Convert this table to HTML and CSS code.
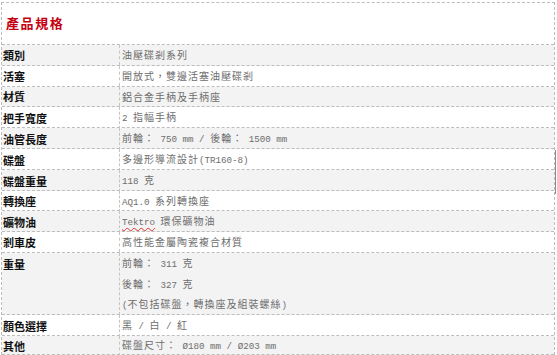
FILE: index.html
```html
<!DOCTYPE html>
<html lang="zh-Hant">
<head>
<meta charset="utf-8">
<title>產品規格</title>
<link rel="stylesheet" href="styles.css">
</head>
<body>
<div class="spec">
  <div class="spec-head">產品規格</div>
  <div class="row alt"><div class="label">類別</div><div class="value">油壓碟剎系列</div></div>
  <div class="row"><div class="label">活塞</div><div class="value">開放式，雙邊活塞油壓碟剎</div></div>
  <div class="row alt"><div class="label">材質</div><div class="value">鋁合金手柄及手柄座</div></div>
  <div class="row"><div class="label">把手寬度</div><div class="value"><span class="en">2 </span>指幅手柄</div></div>
  <div class="row alt"><div class="label">油管長度</div><div class="value">前輪：<span class="en"> 750 mm / </span>後輪：<span class="en"> 1500 mm</span></div></div>
  <div class="row"><div class="label">碟盤</div><div class="value">多邊形導流設計<span class="en">(TR160-8)</span></div></div>
  <div class="row alt"><div class="label">碟盤重量</div><div class="value"><span class="en">118 </span>克</div></div>
  <div class="row"><div class="label">轉換座</div><div class="value"><span class="en">AQ1.0 </span>系列轉換座</div></div>
  <div class="row alt"><div class="label">礦物油</div><div class="value"><span class="en spell">Tektro</span><span class="en"> </span>環保礦物油</div></div>
  <div class="row"><div class="label">剎車皮</div><div class="value">高性能金屬陶瓷複合材質</div></div>
  <div class="row alt tall"><div class="label">重量</div><div class="value lines"><div class="line">前輪：<span class="en"> 311 </span>克</div><div class="line">後輪：<span class="en"> 327 </span>克</div><div class="line"><span class="en">(</span>不包括碟盤，轉換座及組裝螺絲<span class="en">)</span></div></div></div>
  <div class="row"><div class="label">顏色選擇</div><div class="value">黑<span class="en"> / </span>白<span class="en"> / </span>紅</div></div>
  <div class="row alt last"><div class="label">其他</div><div class="value">碟盤尺寸：<span class="en"> Ø180 mm / Ø203 mm</span></div></div>
</div>
<div class="scroll-thumb"></div>
</body>
</html>
```
FILE: styles.css
```css
html, body {
  margin: 0;
  padding: 0;
  background: #ffffff;
}

body {
  position: relative;
  width: 557px;
  height: 355px;
  overflow: hidden;
}

.spec {
  box-sizing: border-box;
  width: 554px;
  margin: 2px 0 0 1px;
  border: 1px dashed #bdbdbd;
  border-bottom: none;
  display: flex;
  flex-direction: column;
}

.spec-head {
  box-sizing: border-box;
  height: 42px;
  border-bottom: 1px dashed #bdbdbd;
  display: flex;
  align-items: center;
  padding: 0 0 2px 4px;
  font-family: "Noto Sans CJK TC", sans-serif;
  font-weight: 700;
  font-size: 13px;
  letter-spacing: 1.6px;
  color: #c40010;
}

.row {
  box-sizing: border-box;
  height: 20.8px;
  border-bottom: 1px dashed #bdbdbd;
  display: grid;
  grid-template-columns: 118px 1fr;
  background: #ffffff;
}

.row.alt {
  background: #f3f3f3;
}

.row.tall {
  height: 62.4px;
}

.row.last {
  height: 19px;
}

.label {
  box-sizing: border-box;
  border-right: 1px dashed #c4c4c4;
  padding-left: 1px;
  display: flex;
  align-items: center;
  font-family: "Noto Sans CJK TC", sans-serif;
  font-weight: 700;
  font-size: 11px;
  color: #111111;
  white-space: nowrap;
}

.tall .label {
  align-items: flex-start;
  padding-top: 3px;
}

.value {
  padding-left: 2px;
  font-family: "Noto Sans CJK TC", sans-serif;
  font-size: 10px;
  line-height: 19.8px;
  letter-spacing: 1px;
  color: #6e6e6e;
  white-space: pre;
}

.last .value {
  line-height: 18px;
}

.en {
  font-family: "Liberation Mono", monospace;
  font-size: 9.2px;
  letter-spacing: 0;
}

.line {
  height: 20.6px;
  line-height: 20.6px;
  white-space: pre;
}

.spell {
  text-decoration: underline wavy #e03030;
  text-decoration-thickness: 1px;
  text-underline-offset: 2px;
}

.scroll-thumb {
  position: absolute;
  left: 555px;
  top: 150px;
  width: 1px;
  height: 44px;
  background: #8c8c8c;
}
```
